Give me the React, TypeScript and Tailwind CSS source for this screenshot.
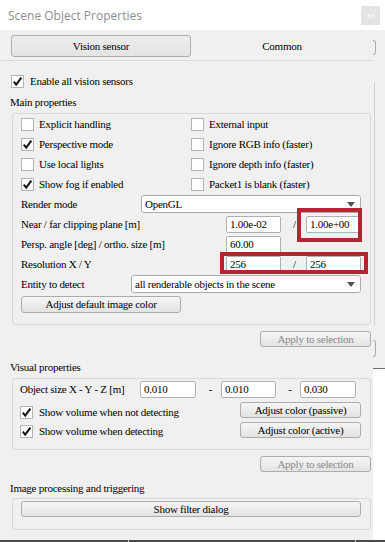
import React from "react";

const Check = ({ checked }: { checked?: boolean }) => (
  <span className="flex h-[13px] w-[13px] shrink-0 items-center justify-center border border-[#b4b4b4] bg-white">
    {checked && (
      <svg width="11" height="11" viewBox="0 0 11 11">
        <path d="M1.8 5.6 L4.2 8.6 L9.4 1.6" fill="none" stroke="#111" strokeWidth="2" />
      </svg>
    )}
  </span>
);

const Field = ({ value, className }: { value: string; className: string }) => (
  <div className={`flex h-[17px] items-center rounded-[2px] border border-[#b0b0b0] bg-white pl-[3px] ${className}`}>
    {value}
  </div>
);

const Btn = ({ children, className, disabled }: { children: React.ReactNode; className: string; disabled?: boolean }) => (
  <div
    className={`flex items-center justify-center rounded-[3px] border border-[#acacac] bg-linear-to-b from-[#f5f5f5] to-[#e3e3e3] ${
      disabled ? "text-[#8a8a8a]" : "text-black"
    } ${className}`}
  >
    {children}
  </div>
);

const Combo = ({ value, className }: { value: string; className: string }) => (
  <div className={`flex h-[18px] items-center justify-between rounded-[3px] border border-[#acacac] bg-white pl-[3px] pr-[5px] ${className}`}>
    <span>{value}</span>
    <svg width="8" height="5" viewBox="0 0 8 5">
      <path d="M0 0 L8 0 L4 5 Z" fill="#505050" />
    </svg>
  </div>
);

const CheckItem = ({ label, checked }: { label: string; checked?: boolean }) => (
  <div className="flex h-[20px] items-center gap-[5px]">
    <Check checked={checked} />
    <span>{label}</span>
  </div>
);

export default function App() {
  return (
    <div className="flex h-[542px] w-[385px] flex-col overflow-hidden bg-white font-[family-name:'Liberation_Serif',serif] text-[11px] leading-[13px] tracking-[-0.25px] text-black">
      {/* title bar */}
      <div className="flex h-[30px] shrink-0 items-center justify-between bg-white pl-[8px] pr-[5px]">
        <span className="font-[family-name:'Open_Sans',sans-serif] text-[12px] tracking-normal text-[#8e8e8e]">
          Scene Object Properties
        </span>
        <div className="flex h-[19px] w-[19px] items-center justify-center bg-[#e4e4e4] font-[family-name:'Liberation_Sans',sans-serif] text-[8px] tracking-normal text-white">
          xx
        </div>
      </div>

      {/* body */}
      <div className="flex h-[510px] shrink-0 bg-[#f0f0f0]">
        <div className="flex w-[373px] shrink-0 flex-col">
          {/* tabs */}
          <div className="ml-[11px] mt-[5px] flex h-[22px] w-[365px] shrink-0">
            <div className="flex w-[180px] items-center justify-center rounded-[3px] border border-[#adadad] bg-linear-to-b from-[#ececec] to-[#e4e4e4]">
              Vision sensor
            </div>
            <div className="flex flex-1 items-center justify-center">Common</div>
            <div className="mb-[2px] mt-[5px] w-[3px] rounded-r-[3px] border-y border-r border-[#acacac]" />
          </div>
          <div className="mt-[3px] h-px w-full shrink-0 bg-[#d9d9d9]" />

          <div className="ml-[11px] mt-[14px] flex h-[13px] items-center gap-[6px]">
            <Check checked />
            <span>Enable all vision sensors</span>
          </div>

          <div className="ml-[10px] mt-[7px] flex h-[14px] items-center">Main properties</div>

          {/* main properties group */}
          <div className="relative ml-[12px] mr-[2px] mt-[4px] rounded-[3px] border border-[#d8d8d8] pb-[10px] pl-[8px] pr-[9px]">
            <div className="grid grid-cols-[170px_1fr]">
              <CheckItem label="Explicit handling" />
              <CheckItem label="External input" />
              <CheckItem label="Perspective mode" checked />
              <CheckItem label="Ignore RGB info (faster)" />
              <CheckItem label="Use local lights" />
              <CheckItem label="Ignore depth  info (faster)" />
              <CheckItem label="Show fog if enabled" checked />
              <CheckItem label="Packet1 is blank (faster)" />
            </div>
            <div className="flex h-[20px] items-center">
              <span>Render mode</span>
              <Combo value="OpenGL" className="ml-auto w-[220px]" />
            </div>
            <div className="flex h-[20px] items-center">
              <span>Near / far clipping plane [m]</span>
              <div className="ml-auto flex items-center">
                <Field value="1.00e-02" className="w-[55px]" />
                <span className="w-[25px] pl-[2px] text-center">/</span>
                <Field value="1.00e+00" className="w-[55px]" />
              </div>
            </div>
            <div className="flex h-[20px] items-center">
              <span>Persp. angle [deg] / ortho. size [m]</span>
              <div className="ml-auto flex items-center">
                <Field value="60.00" className="w-[55px]" />
                <span className="w-[80px]" />
              </div>
            </div>
            <div className="flex h-[20px] items-center">
              <span>Resolution X / Y</span>
              <div className="ml-auto flex items-center">
                <Field value="256" className="w-[55px]" />
                <span className="w-[25px] pl-[2px] text-center">/</span>
                <Field value="256" className="w-[55px]" />
              </div>
            </div>
            <div className="flex h-[20px] items-center">
              <span>Entity to detect</span>
              <Combo value="all renderable objects in the scene" className="ml-auto w-[230px]" />
            </div>
            <div className="flex h-[20px] items-center">
              <Btn className="h-[17px] w-[160px]">Adjust default image color</Btn>
            </div>

            {/* annotation highlights */}
            <div className="absolute left-[284px] top-[94px] h-[34px] w-[65px] border-[4px] border-[#b42530]" />
            <div className="absolute left-[207px] top-[138px] h-[22px] w-[148px] border-[4px] border-[#b42530]" />
          </div>

          <Btn disabled className="mr-[2px] mt-[6px] h-[16px] w-[111px] self-end">
            Apply to selection
          </Btn>

          <div className="ml-[10px] mt-[13px] flex h-[14px] items-center">Visual properties</div>

          {/* visual properties group */}
          <div className="ml-[12px] mr-[2px] mt-[4px] rounded-[3px] border border-[#d8d8d8] pb-[9px] pl-[7px] pr-[9px]">
            <div className="mt-[1px] flex h-[18px] items-center pr-[5px]">
              <span>Object size X - Y - Z [m]</span>
              <div className="ml-auto flex items-center">
                <Field value="0.010" className="w-[56px]" />
                <span className="w-[25px] pl-[4px] text-center">-</span>
                <Field value="0.010" className="w-[55px]" />
                <span className="w-[24px] pl-[4px] text-center">-</span>
                <Field value="0.030" className="w-[56px]" />
              </div>
            </div>
            <div className="mt-[2px] flex h-[20px] items-center">
              <div className="mt-[4px] flex items-center gap-[6px]">
                <Check checked />
                <span>Show volume when not detecting</span>
              </div>
              <Btn className="ml-auto h-[16px] w-[121px]">Adjust color (passive)</Btn>
            </div>
            <div className="flex h-[20px] items-center">
              <div className="mt-[2px] flex items-center gap-[6px]">
                <Check checked />
                <span>Show volume when detecting</span>
              </div>
              <Btn className="ml-auto h-[16px] w-[121px]">Adjust color (active)</Btn>
            </div>
          </div>

          <Btn disabled className="mr-[2px] mt-[6px] h-[16px] w-[111px] self-end">
            Apply to selection
          </Btn>

          <div className="ml-[10px] mt-[9px] flex h-[14px] items-center">Image processing and triggering</div>

          <div className="ml-[12px] mr-[2px] mt-[3px] rounded-[3px] border border-[#d8d8d8] pb-[12px] pl-[8px] pr-[9px] pt-[2px]">
            <Btn className="h-[16px] w-full">Show filter dialog</Btn>
          </div>
        </div>

        {/* window behind, right strip */}
        <div className="flex w-[12px] shrink-0 flex-col">
          <div className="flex h-[338px] shrink-0 flex-col">
            <div className="ml-[1px] mt-[53px] h-[243px] w-px bg-[#cfcfcf]" />
            <div className="mt-[14px] h-[17px] w-[3px] rounded-r-[3px] border-y border-r border-[#acacac]" />
          </div>
          <div className="flex-1 border-t border-[#6f6f6f] bg-white" />
        </div>
      </div>

      {/* bottom edge */}
      <div className="flex h-[2px] shrink-0 bg-[#4a4a4a]">
        <div className="w-[128px]" />
        <div className="w-px bg-[#cfcfcf]" />
        <div className="w-[226px]" />
        <div className="w-px bg-[#cfcfcf]" />
      </div>
    </div>
  );
}
